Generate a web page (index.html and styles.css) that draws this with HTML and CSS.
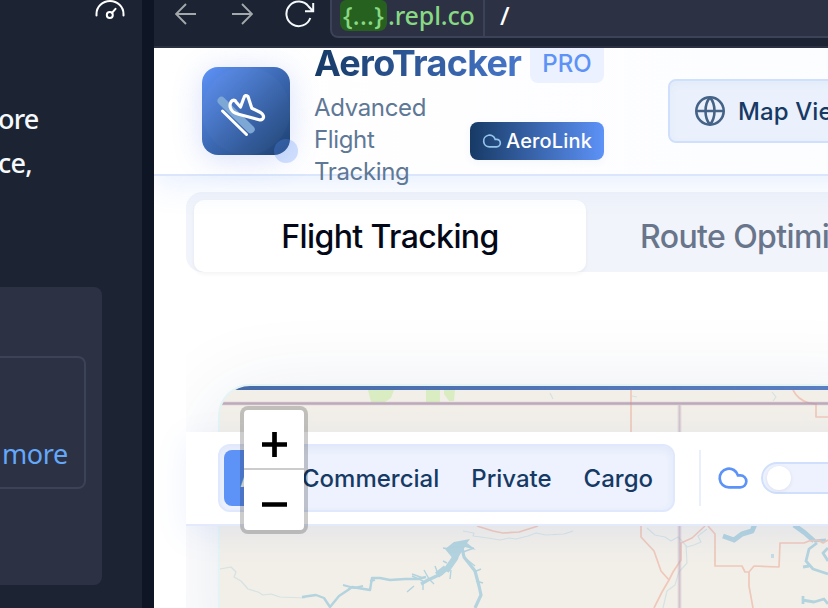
FILE: index.html
```html
<!DOCTYPE html>
<html lang="en">
<head>
<meta charset="utf-8">
<title>AeroTracker</title>
<link rel="stylesheet" href="styles.css">
</head>
<body>
<div class="app">
  <aside class="sidebar">
    <svg class="gauge" viewBox="0 0 30 20" fill="none" stroke="#fff" stroke-width="2" stroke-linecap="round"><path d="M1.500 15.500V14a13.500 13 0 0 1 27 0v1.500"/><circle cx="14.800" cy="15" r="3"/><path d="M17 12.800l3.500-4"/></svg>
    <p class="message">ore<br>ce,</p>
    <div class="card"><div class="card-inner"><a class="more">more</a></div></div>
  </aside>
  <main class="preview">
    <div class="toolbar">
      <svg class="nav-icon" viewBox="0 0 22 22"><path d="M21 11H1.500M11 1L1 11l10 10"/></svg>
      <svg class="nav-icon forward" viewBox="0 0 22 22"><path d="M1 11h19.500M11 1l10 10-10 10"/></svg>
      <svg class="reload" viewBox="0 0 30 28"><path d="M25.300 18A12.300 12.300 0 1 1 23.600 6.500L28 11M28.200 3v8.300H20"/></svg>
      <div class="url"><span class="token">{...}</span><span class="domain">.repl.co</span><span class="path">/</span></div>
    </div>
    <div class="page">
      <header class="header">
        <div class="logo">
          <svg viewBox="202 67 88 88" fill="none" stroke-linecap="round" stroke-linejoin="round">
            <circle cx="246" cy="111" r="44" fill="#fff" opacity=".025"/>
            <path d="M221.500 100.800L250.700 129.300" stroke="#7da7d5" stroke-width="8"/>
            <path d="M222.500 111L246.500 134.500" stroke="#fff" stroke-width="3"/>
            <path d="M230.300 107.500C229.500 105 230.500 101.500 232.500 100.500Q235 99.500 236.500 102.500L240.500 107L244 97.500Q245 94.200 248 96.500L251.800 108.200L260.500 112.500Q264 115 263.500 117.500Q262.500 120.500 259 119.700L238.500 114.200Q231.500 112.500 230.300 107.500Z" stroke="#fff" stroke-width="3.200"/>
          </svg>
          <i class="logo-dot"></i>
        </div>
        <div class="brand">
          <div class="brand-top"><h1>AeroTracker</h1><span class="pro">PRO</span></div>
          <div class="brand-bottom">
            <p>Advanced<br>Flight<br>Tracking</p>
            <span class="link-badge"><svg viewBox="0 0 24 24"><path d="M17.500 19H9a7 7 0 1 1 6.710-9h1.790a4.500 4.500 0 1 1 0 9Z"/></svg>AeroLink</span>
          </div>
        </div>
        <button class="map-view"><svg viewBox="0 0 32 32"><circle cx="16" cy="16" r="13.700"/><path d="M2.300 16h27.400M16 2.300c-6 7-6 20.400 0 27.400M16 2.300c6 7 6 20.400 0 27.400"/></svg>Map View</button>
      </header>
      <nav class="tabs"><span class="tab active">Flight Tracking</span><span class="tab route">Route Optimizer</span></nav>
      <section class="map-section">
        <div class="map-clip">
        <div class="map-card">
          <svg class="map" viewBox="220 386 640 240" preserveAspectRatio="xMinYMin slice" fill="none" stroke-linejoin="round">
            <path d="M368 390h26l-3 8-6 4h-14z M426 390h14v12h-14z M444 390h11l-1 11h-5l-5-7z" fill="#daecc1"/>
            <g stroke="#b8d6df" stroke-width="1.200" opacity=".5">
              <path d="M220 569l11-2 5 5-2 5 7 4 7 8 10 3 5 3 8-1 9 3 25 1"/>
              <path d="M463 531l11 2-1 3 15 2 12 2 9-2 7 1 12-3 8-3 10 2 18-1 9-3"/>
              <path d="M647 528l8 7 10 2 6 4 7-4 4 4 5 6 7-2 7-3-3-6 9-7"/>
              <path d="M686 545l1 18-8 9-4 13-8 6-4 17"/>
              <path d="M772 392l4 5-3 4M550 393l3 6M632 396l5 1"/>
            </g>
            <g stroke="#b3d3de">
              <path d="M302 597l14-2 8 3 6 9 9-11 9-6 4-3 18 3 2-12h8l10 2 15-1h13l8-2" stroke-width="2.400"/>
              <path d="M343 585l11 3 9-2M370 581l5-1" stroke-width="2"/>
              <path d="M421 584l7-4 13-6 8-8 9-13 3-10 3 14 11 14 4 15 2 9-6 13" stroke-width="3.200"/>
              <path d="M446 571l9-13 5-15M437 575l9-7" stroke-width="6.500"/>
              <path d="M412 576l11 5v9M424 570l5 9 5 5M412 574l11 4M435 566l3 8M447 563l-4-2M451 570l-1 9M443 548l14 2M463 552l11-4M465 558l10 8M474 572l7-3M476 581l7 2M407 592l7-6" stroke-width="1.400"/>
            </g>
            <path d="M445 549l9-7 16-3-3 4 9 7-11-3-6 9-5 4z" fill="#b3d3de"/>
            <g stroke="#b3d3de">
              <path d="M723 536l11 4 8-6 10-3 3-7" stroke-width="5"/>
              <path d="M794 525l11 8 9 8" stroke-width="5"/>
              <path d="M817 543l-8 6-3 12 7 8 15 5M803 567l6-1M828 548l-5 5 5 8M814 541l12-1M802 600l12 2 10-3 4 5M803 596v8" stroke-width="2.800"/>
              <path d="M771 556h3" stroke-width="4" opacity=".7"/>
            </g>
            <g stroke="#efc8ba" stroke-width="1.700">
              <path d="M631 390v42M793 390q5 10 16 13l7 1v13h12"/>
              <path d="M477 526l16 5 10 2 16-1 19-6"/>
              <path d="M641 526v11l13 14 7 20 8 9 4-8 8-12V543l11-5 13-12M669 580l-7 12-8 16"/>
              <path d="M708 526l7 8v32h27l3 6h4l5-6 25 1 1-24h24l5-2 9-1 5 3 5-3M749 572v14l4 22"/>
            </g>
            <path d="M220 403.500h640M679.500 405v220" stroke="#c2abc1" stroke-width="4" opacity=".25"/>
            <path d="M220 403.500h640" stroke="#ad93ac" stroke-width="2.500" opacity=".7"/>
            <path d="M679.500 405v220" stroke="#b7a5b8" stroke-width="1.800" opacity=".45"/>
          </svg>
        </div>
        </div>
        <div class="filter-bar">
          <div class="segments"><span class="segment selected">All</span><span class="segment">Commercial</span><span class="segment">Private</span><span class="segment">Cargo</span></div>
          <i class="divider"></i>
          <svg class="cloud" viewBox="0 0 24 24"><path d="M17.500 19H9a7 7 0 1 1 6.710-9h1.790a4.500 4.500 0 1 1 0 9Z"/></svg>
          <span class="switch"><i></i></span>
        </div>
        <div class="zoom-control">
          <span><svg viewBox="0 0 24 24"><path d="M12 0v24M0 12h24"/></svg></span>
          <span><svg viewBox="0 0 24 24"><path d="M0 12h24"/></svg></span>
        </div>
      </section>
    </div>
  </main>
</div>
</body>
</html>
```
FILE: styles.css
```css
* { box-sizing: border-box; }
body { margin: 0; overflow: hidden; font-family: Inter, "Liberation Sans", sans-serif; }
p, h1 { margin: 0; }
svg { display: block; flex: none; }
.app { display: flex; width: 828px; height: 608px; overflow: hidden; background: #0e1525; }

.sidebar { width: 142px; flex: none; margin-right: 12px; background: #1c2333; color: #f5f9fc; }
.gauge { width: 30px; height: 20px; margin-left: 95px; }
.message { margin: 77px 0 0 -2px; font: 500 27px/44px "Noto Sans", sans-serif; letter-spacing: -.8px; }
.card { width: 102px; height: 298px; margin-top: 102px; padding-top: 69px; background: #2c3143; border-radius: 0 8px 8px 0; }
.card-inner { width: 86px; height: 133px; border: 2px solid #3c4257; border-left: 0; border-radius: 0 8px 8px 0; padding: 74px 0 0 2px; }
.more { font: 400 27px/44px "Noto Sans", sans-serif; letter-spacing: -.4px; color: #64a8fa; }

.preview { flex: none; width: 674px; overflow: hidden; }
.toolbar { display: flex; height: 48px; background: #1c2333; border-bottom: 2px solid #2b3042; }
.nav-icon { width: 22px; height: 22px; margin: 3px 0 0 21px; fill: none; stroke: #a3a8ab; stroke-width: 1.900; }
.nav-icon.forward { margin-left: 34px; }
.reload { width: 30px; height: 28px; margin: 0 0 0 32px; fill: none; stroke: #f5f9fc; stroke-width: 2; }
.url { display: flex; width: 520px; height: 38px; margin: 0 0 0 15px; padding: 0 0 0 8px; flex: none; border: 2px solid #3c4257; border-top: 0; border-radius: 0 0 8px 8px; background: #2c3143; font: 500 25px/30px "Noto Sans", sans-serif; color: #88d884; }
.token { width: 47px; height: 31px; border-radius: 6px 6px 8px 8px; background: #27611f; text-align: center; letter-spacing: .3px; }
.domain { width: 98px; padding-left: 1px; border-right: 2px solid #3c4257; letter-spacing: -.15px; }
.path { padding-left: 15px; color: #fff; }

.page { position: relative; height: 560px; overflow: hidden; background: #fff; }
.header { position: relative; z-index: 2; display: flex; width: 900px; height: 128px; border-bottom: 2px solid #dbe6fc; background: linear-gradient(90deg, #fff, #fbfcff); box-shadow: 0 8px 30px rgba(93, 146, 247, .15); }
.logo { position: relative; width: 88px; height: 88px; margin: 19px 0 0 48px; flex: none; border-radius: 16px; background: linear-gradient(135deg, #5d92f7, #1b3f6f); box-shadow: 0 4px 30px rgba(93, 125, 235, .24); }
.logo svg { width: 88px; height: 88px; }
.logo-dot { position: absolute; right: -8px; bottom: -8px; width: 24px; height: 24px; border-radius: 50%; background: rgba(93, 146, 247, .28); }
.brand { width: 290px; margin: -7px 0 0 24px; flex: none; }
.brand-top { display: flex; height: 51px; }
h1 { width: 216px; flex: none; font-size: 36px; line-height: 44px; letter-spacing: -.7px; color: transparent; background: linear-gradient(90deg, #163a66, #4a7ad0); -webkit-background-clip: text; background-clip: text; white-space: nowrap; }
.pro { width: 74px; height: 42px; padding-top: 6px; border-radius: 8px; background: #ebf1fe; color: #5d92f7; text-align: center; font-size: 24px; line-height: 34px; font-weight: 500; }
.brand-bottom { display: flex; justify-content: space-between; }
.brand-bottom p { color: #5f7896; font-size: 24px; line-height: 32px; letter-spacing: -.35px; }
.link-badge { display: flex; align-items: center; width: 134px; height: 38px; margin-top: 30px; padding-left: 12px; gap: 4px; border-radius: 8px; color: #fff; background: linear-gradient(90deg, #173a65, #5d92f7); font-size: 20px; font-weight: 500; letter-spacing: .15px; box-shadow: 0 2px 8px rgba(30, 70, 130, .05); }
.link-badge svg { width: 20px; height: 20px; fill: none; stroke: #93c5eb; stroke-width: 2; }
.map-view { display: flex; align-items: center; gap: 12px; width: 220px; height: 64px; margin: 31px 0 0 64px; padding: 1px 24px 0; flex: none; border: 2px solid #cfdffc; border-radius: 8px; background: #eaf1fd; color: #173a65; font: 500 24px Inter, sans-serif; letter-spacing: .1px; white-space: nowrap; box-shadow: inset 0 3px 8px rgba(30, 70, 130, .04); }
.map-view svg { width: 32px; height: 32px; margin-top: -1px; fill: none; stroke: #456387; stroke-width: 2.600; }

.tabs { display: flex; width: 900px; height: 80px; margin: 16px 0 0 32px; padding: 8px 8px 0; border-radius: 16px; background: #f1f4fa; color: #68758b; font-size: 32px; line-height: 74px; font-weight: 500; letter-spacing: -.6px; }
.tab { width: 392px; flex: none; height: 72px; text-align: center; white-space: nowrap; }
.tab.active { background: #fff; color: #020817; border-radius: 10px; box-shadow: 0 2px 4px rgba(0, 0, 0, .05); }
.tab.route { padding-left: 54px; text-align: left; }

.map-section { position: relative; width: 720px; height: 336px; margin-left: 32px; }
.map-clip { height: 336px; padding: 112px 0 0 32px; overflow: hidden; }
.map-card { width: 680px; height: 280px; overflow: hidden; border: 2px solid #e4f4f5; border-radius: 32px 0 0 0; background: #f2efe9; box-shadow: 0 16px 90px rgba(30, 60, 110, .12); }
.map { width: 640px; height: 240px; }
.map-card::before { content: ""; display: block; height: 4px; margin-bottom: -4px; position: relative; background: linear-gradient(90deg, #476aa8, #5b80c4); }
.filter-bar { position: absolute; top: 160px; left: 0; display: flex; align-items: center; width: 760px; height: 94px; padding: 0 0 0 32px; border-bottom: 2px solid #e3eafb; background: #fff; box-shadow: 0 8px 30px rgba(93, 125, 235, .1); }
.segments { display: flex; align-items: center; width: 457px; height: 68px; padding: 4px; flex: none; border: 2px solid #dfe8fd; border-radius: 12px; background: #edf2fe; box-shadow: inset 0 3px 8px rgba(30, 70, 130, .06); font-size: 24px; font-weight: 500; color: #173a65; }
.segment { height: 56px; padding: 0 16px; line-height: 57px; letter-spacing: 0; }
.segment.selected { width: 62px; border-radius: 8px; background: #5d92f7; color: #fff; }
.divider { width: 2px; height: 56px; margin-left: 24px; background: #e9effd; }
.cloud { width: 32px; height: 32px; margin-left: 16px; fill: none; stroke: #5d92f7; stroke-width: 2; }
.switch { width: 88px; height: 32px; margin-left: 12px; padding: 2px 4px; border: 2px solid #cfdffc; border-radius: 16px; background: #edf2fe; }
.switch i { display: block; width: 24px; height: 24px; border-radius: 50%; background: #fff; box-shadow: 0 1px 4px rgba(0, 0, 0, .08); }
.zoom-control { position: absolute; top: 134px; left: 54px; width: 68px; height: 128px; border: 4px solid rgba(0, 0, 0, .2); border-radius: 8px; background: #fff; background-clip: padding-box; overflow: hidden; }
.zoom-control span { display: flex; align-items: center; justify-content: center; height: 60px; padding-top: 9px; padding-left: 1px; }
.zoom-control span:first-child { border-bottom: 2px solid #ccc; padding-top: 11px; }
.zoom-control svg { width: 25px; height: 25px; fill: none; stroke: #000; stroke-width: 4.500; }
```
